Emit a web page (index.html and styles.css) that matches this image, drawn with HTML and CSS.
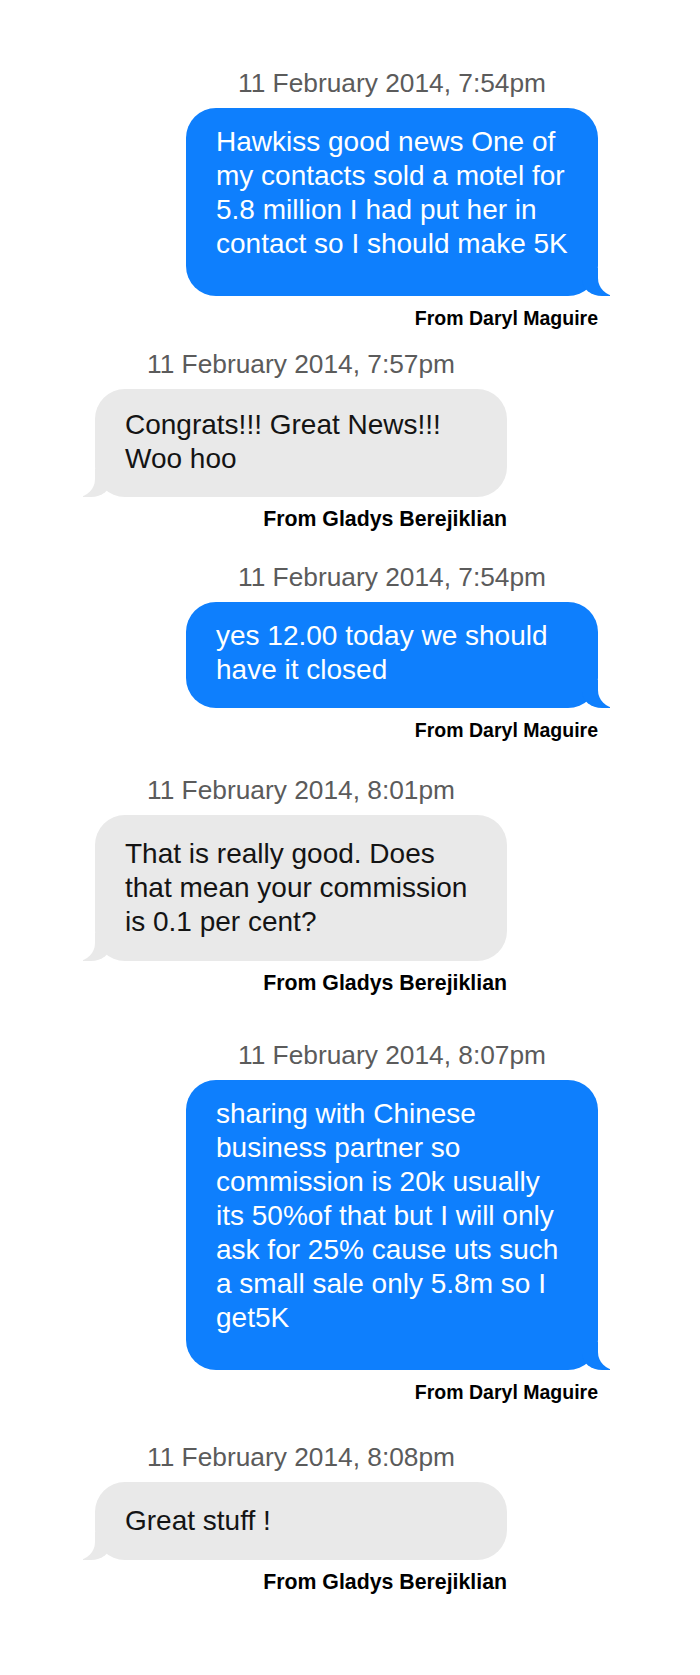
FILE: index.html
```html
<!DOCTYPE html>
<html lang="en">
<head>
    <meta charset="UTF-8">
    <meta name="viewport" content="width=device-width, initial-scale=1.0">
    <title>Messages</title>
    <link rel="stylesheet" href="styles.css">
</head>
<body>

    <div class="thread">

        <div class="msg out">
            <div class="msg-time">11 February 2014, 7:54pm</div>
            <div class="bubble roomy">Hawkiss good news One of my contacts sold a motel for 5.8 million I had put her in contact so I should make 5K</div>
            <div class="msg-from">From Daryl Maguire</div>
        </div>

        <div class="msg in gap-s">
            <div class="msg-time">11 February 2014, 7:57pm</div>
            <div class="bubble snug">Congrats!!! Great News!!! Woo hoo</div>
            <div class="msg-from">From Gladys Berejiklian</div>
        </div>

        <div class="msg out gap-n">
            <div class="msg-time">11 February 2014, 7:54pm</div>
            <div class="bubble">yes 12.00 today we should have it closed</div>
            <div class="msg-from">From Daryl Maguire</div>
        </div>

        <div class="msg in">
            <div class="msg-time">11 February 2014, 8:01pm</div>
            <div class="bubble">That is really good. Does that mean your commission is 0.1 per cent?</div>
            <div class="msg-from">From Gladys Berejiklian</div>
        </div>

        <div class="msg out gap-l">
            <div class="msg-time">11 February 2014, 8:07pm</div>
            <div class="bubble roomy">sharing with Chinese business partner so commission is 20k usually its 50%of that but I will only ask for 25% cause uts such a small sale only 5.8m so I get5K</div>
            <div class="msg-from">From Daryl Maguire</div>
        </div>

        <div class="msg in gap-m">
            <div class="msg-time">11 February 2014, 8:08pm</div>
            <div class="bubble">Great stuff !</div>
            <div class="msg-from">From Gladys Berejiklian</div>
        </div>

    </div>

</body>
</html>
```

FILE: styles.css
```css
body {
    margin: 0;
    background-color: #fff;
    font-family: "Liberation Sans", Arial, sans-serif;
    color: #111;
}

.thread {
    padding-top: 68px;
    padding-bottom: 60px;
    display: flex;
    flex-direction: column;
}

.msg {
    width: 412px;
    display: flex;
    flex-direction: column;
}

.msg + .msg {
    margin-top: 33px;
}

.msg.gap-s {
    margin-top: 19px;
}

.msg.gap-n {
    margin-top: 31px;
}

.msg.gap-m {
    margin-top: 38px;
}

.msg.gap-l {
    margin-top: 45px;
}

.msg.out {
    margin-left: 186px;
}

.msg.in {
    margin-left: 95px;
}

.msg-time {
    font-size: 26.3px;
    line-height: 30px;
    color: #5b5b5b;
    text-align: center;
    margin-bottom: 10px;
}

.bubble {
    position: relative;
    box-sizing: border-box;
    width: 100%;
    font-size: 28px;
    line-height: 34px;
    border-radius: 30px;
}

.out .bubble {
    background-color: #0e7ffd;
    color: #fff;
    padding: 17px 27px 21px 30px;
}

.out .bubble.roomy {
    padding-bottom: 35px;
}

.in .bubble {
    background-color: #e9e9e9;
    color: #141414;
    padding: 22px 27px 22px 30px;
}

.in .bubble.snug {
    padding-top: 19px;
    padding-bottom: 21px;
}

/* little tails, drawn the usual way: a coloured block with a white mask over it */
.bubble::before,
.bubble::after {
    content: "";
    position: absolute;
    bottom: 0;
    height: 28px;
}

.out .bubble::before {
    right: -12px;
    width: 28px;
    background-color: #0e7ffd;
    border-bottom-left-radius: 20px 16px;
}

.out .bubble::after {
    right: -28px;
    width: 28px;
    background-color: #fff;
    border-bottom-left-radius: 18px;
}

.in .bubble::before {
    left: -12px;
    width: 28px;
    background-color: #e9e9e9;
    border-bottom-right-radius: 20px 16px;
}

.in .bubble::after {
    left: -28px;
    width: 28px;
    background-color: #fff;
    border-bottom-right-radius: 18px;
}

.msg-from {
    margin-top: 10px;
    text-align: right;
    font-weight: bold;
    line-height: 24px;
    color: #000;
}

.out .msg-from {
    font-size: 19.5px;
}

.in .msg-from {
    font-size: 21.3px;
}
```
